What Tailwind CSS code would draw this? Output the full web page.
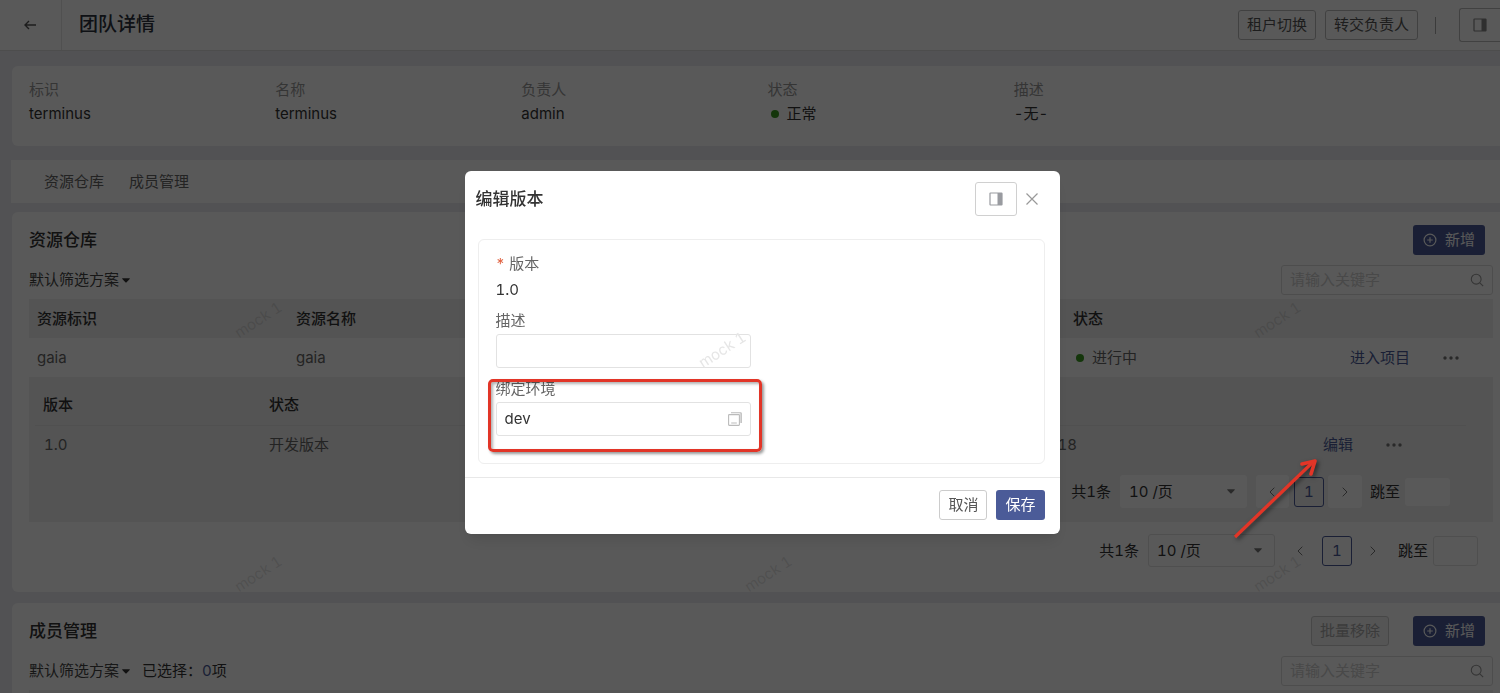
<!DOCTYPE html>
<html lang="zh-CN">
<head>
  <meta charset="UTF-8" />
  <meta name="viewport" content="width=device-width, initial-scale=1.0" />
  <title>团队详情</title>
  <script src="https://cdn.jsdelivr.net/npm/@tailwindcss/browser@4"></script>
  <style>body { font-family: Inter, 'Noto Sans CJK SC', sans-serif; }</style>
</head>
<body class="text-[15px] leading-6 text-[#333] tabular-nums">

  <!-- Shared icons -->
  <svg class="hidden">
    <symbol id="panel" viewBox="0 0 14 14">
      <path d="M1.5 1h11a.5.5 0 0 1 .5.5v11a.5.5 0 0 1-.5.5h-11a.5.5 0 0 1-.5-.5v-11a.5.5 0 0 1 .5-.5z" fill="none" stroke="currentColor" stroke-width="1.2" />
      <path d="M8.5 1H13v12H8.5z" fill="currentColor" />
    </symbol>
    <symbol id="plus" viewBox="0 0 14 14">
      <g fill="none" stroke="currentColor" stroke-width="1.2"><circle cx="7" cy="7" r="5.9" /><path d="M7 4.2v5.6M4.2 7h5.6" /></g>
    </symbol>
    <symbol id="search" viewBox="0 0 14 14">
      <g fill="none" stroke="currentColor" stroke-width="1.1"><circle cx="6.2" cy="6.2" r="4.9" /><path d="M9.8 9.8l3.4 3.4" /></g>
    </symbol>
    <symbol id="caret" viewBox="0 0 8 5"><path d="M.6.3h6.8c.4 0 .6.4.3.7L4.4 4.4a.6.6 0 0 1-.8 0L.3 1C0 .7.2.3.6.3z" fill="currentColor" /></symbol>
    <symbol id="prev" viewBox="0 0 6 10"><path d="M5.3.7L1 5l4.3 4.3" fill="none" stroke="currentColor" /></symbol>
    <symbol id="next" viewBox="0 0 6 10"><path d="M.7.7L5 5 .7 9.3" fill="none" stroke="currentColor" /></symbol>
    <symbol id="more" viewBox="0 0 16 4"><g fill="currentColor"><circle cx="2" cy="2" r="1.7" /><circle cx="8" cy="2" r="1.7" /><circle cx="14" cy="2" r="1.7" /></g></symbol>
  </svg>

  <div class="relative flex h-screen flex-col overflow-hidden bg-[#ebebf0]">

    <!-- Header -->
    <header class="flex h-[51px] shrink-0 items-center border-b border-[#ddd] bg-white">
      <a href="#" aria-label="返回" class="flex h-full w-[62px] items-center border-r border-[#e5e5e5] pl-6 text-[#555]">
        <svg class="h-[10px] w-3" viewBox="0 0 12 10"><path d="M12 5H1M5 1L1 5l4 4" fill="none" stroke="currentColor" stroke-width="1.4" /></svg>
      </a>
      <h1 class="ml-[17px] flex-1 text-[19px] font-medium text-[#2b323c]">团队详情</h1>
      <button class="h-[30px] rounded-[3px] border border-[#bbb] px-2 leading-7 text-[#555]">租户切换</button>
      <button class="ml-[9px] h-[30px] rounded-[3px] border border-[#bbb] px-2 leading-7 text-[#555]">转交负责人</button>
      <span class="mr-[23px] ml-[17px] h-[17px] w-px bg-[#aaa]"></span>
      <button aria-label="侧栏" class="flex h-[34px] w-[41px] items-center justify-center rounded-l-[3px] border border-r-0 border-[#bbb] text-[#888]"><svg class="h-[14px] w-[14px]"><use href="#panel" /></svg></button>
    </header>

    <!-- Team info -->
    <section class="mt-[15px] ml-3 h-20 shrink-0 overflow-hidden rounded-l-md bg-white pt-3 pl-[17px]">
      <dl class="-mr-1.5 grid grid-cols-6">
        <div><dt class="text-[#999]">标识</dt><dd>terminus</dd></div>
        <div><dt class="text-[#999]">名称</dt><dd>terminus</dd></div>
        <div><dt class="text-[#999]">负责人</dt><dd>admin</dd></div>
        <div><dt class="text-[#999]">状态</dt><dd class="flex items-center gap-2 pl-[3px]"><span class="h-2 w-2 rounded-full bg-[#3b9a22]"></span>正常</dd></div>
        <div><dt class="text-[#999]">描述</dt><dd>-无-</dd></div>
      </dl>
    </section>

    <!-- Tabs -->
    <nav class="mt-[14px] ml-[11px] flex h-[43px] shrink-0 items-center gap-[25px] bg-white pl-[33px] text-[#666]">
      <a href="#repo">资源仓库</a>
      <a href="#members">成员管理</a>
    </nav>

    <!-- Repositories -->
    <section id="repo" class="mt-[9px] ml-3 shrink-0 rounded-l-md bg-white pt-[13px] pr-[7px] pb-[25px] pl-[17px]">
      <div class="flex h-[30px] items-center justify-between pr-2">
        <h2 class="text-[17px] font-medium">资源仓库</h2>
        <button class="flex h-[30px] items-center gap-2 rounded-[3px] bg-[#4b5b98] px-[10px] text-white"><svg class="h-[14px] w-[14px]"><use href="#plus" /></svg>新增</button>
      </div>
      <div class="mt-[10px] flex h-[30px] items-center justify-between">
        <label class="flex items-center gap-[2px]">
          <select aria-label="筛选方案" class="appearance-none text-[#444]"><option>默认筛选方案</option></select>
          <svg class="h-[5px] w-2"><use href="#caret" /></svg>
        </label>
        <label class="flex h-[30px] w-[212px] items-center rounded-[3px] border border-[#ddd] px-2 text-[#999]">
          <input aria-label="关键字" placeholder="请输入关键字" class="min-w-0 flex-1 placeholder:text-[#d0d0d0]" />
          <svg class="h-[14px] w-[14px]"><use href="#search" /></svg>
        </label>
      </div>

      <table class="mt-1 w-full table-fixed text-left">
        <colgroup><col class="w-[259px]" /><col class="w-[259px]" /><col class="w-[259px]" /><col class="w-[259px]" /><col class="w-[259px]" /><col /></colgroup>
        <thead class="bg-[#efefef]">
          <tr class="h-[39px]">
            <th class="px-2 font-medium">资源标识</th>
            <th class="px-2 font-medium">资源名称</th>
            <th></th>
            <th></th>
            <th class="px-2 font-medium">状态</th>
            <th></th>
          </tr>
        </thead>
        <tbody class="text-[#666]">
          <tr class="h-[39px]">
            <td class="px-2">gaia</td>
            <td class="px-2">gaia</td>
            <td></td>
            <td></td>
            <td class="px-2"><span class="flex items-center gap-2 pl-[3px]"><i class="h-2 w-2 rounded-full bg-[#3b9a22]"></i>进行中</span></td>
            <td class="pl-[26px]"><span class="flex items-center gap-[33px]"><a href="#" class="text-[#4b5b98]">进入项目</a><button aria-label="更多" class="text-[#777]"><svg class="h-1 w-4"><use href="#more" /></svg></button></span></td>
          </tr>
          <tr>
            <td colspan="6" class="bg-[#efefef] pt-2 pb-[14px] pl-[6px]">
              <!-- Versions -->
              <div class="pr-[27px]">
                <table class="w-full table-fixed">
                  <colgroup><col class="w-[225px]" /><col class="w-[225px]" /><col class="w-[225px]" /><col class="w-[375px]" /><col /></colgroup>
                  <thead>
                    <tr class="h-10 border-b border-[#e4e4e4] text-[#333]">
                      <th class="px-2 font-medium">版本</th>
                      <th class="px-[9px] font-medium">状态</th>
                      <th></th>
                      <th></th>
                      <th></th>
                    </tr>
                  </thead>
                  <tbody>
                    <tr class="h-10">
                      <td class="px-[9px]">1.0</td>
                      <td class="px-[9px]">开发版本</td>
                      <td></td>
                      <td class="px-2 text-right">18</td>
                      <td><span class="flex items-center justify-end gap-[33px] pr-16"><a href="#" class="text-[#4b5b98]">编辑</a><button aria-label="更多" class="text-[#777]"><svg class="h-1 w-4"><use href="#more" /></svg></button></span></td>
                    </tr>
                  </tbody>
                </table>
              </div>
              <div class="mt-[10px] flex h-[33px] items-center justify-end pr-[43px] text-[#333]">
                <span>共1条</span>
                <label class="ml-[9px] flex h-[33px] w-[127px] items-center rounded-[3px] bg-white pr-3 pl-[9px]">
                  <select aria-label="每页条数" class="flex-1 appearance-none"><option>10 /页</option></select>
                  <svg class="h-[5px] w-2 text-[#777]"><use href="#caret" /></svg>
                </label>
                <button aria-label="上一页" class="ml-[9px] flex h-[33px] w-[33px] items-center justify-center rounded-[3px] bg-white text-[#777]"><svg class="h-[10px] w-[6px]"><use href="#prev" /></svg></button>
                <button class="ml-[5px] h-[30px] w-[30px] rounded-[3px] border border-[#4b5b98] text-[#4b5b98]">1</button>
                <button aria-label="下一页" class="ml-1 flex h-[33px] w-[34px] items-center justify-center rounded-[3px] bg-white text-[#777]"><svg class="h-[10px] w-[6px]"><use href="#next" /></svg></button>
                <label class="ml-2 flex items-center gap-[5px]">跳至<input class="h-7 w-[45px] rounded-[3px] bg-white px-1" /></label>
              </div>
            </td>
          </tr>
        </tbody>
      </table>

      <div class="mt-3 flex h-[33px] items-center justify-end pr-[15px]">
        <span>共1条</span>
        <label class="ml-[9px] flex h-[33px] w-[127px] items-center rounded-[3px] border border-[#e2e2e2] pr-3 pl-2">
          <select aria-label="每页条数" class="flex-1 appearance-none"><option>10 /页</option></select>
          <svg class="h-[5px] w-2 text-[#777]"><use href="#caret" /></svg>
        </label>
        <button aria-label="上一页" class="ml-[9px] flex h-[33px] w-[33px] items-center justify-center text-[#777]"><svg class="h-[10px] w-[6px]"><use href="#prev" /></svg></button>
        <button class="ml-[5px] h-[30px] w-[30px] rounded-[3px] border border-[#4b5b98] text-[#4b5b98]">1</button>
        <button aria-label="下一页" class="ml-1 flex h-[33px] w-[34px] items-center justify-center text-[#777]"><svg class="h-[10px] w-[6px]"><use href="#next" /></svg></button>
        <label class="ml-2 flex items-center gap-[5px]">跳至<input class="h-[30px] w-[45px] rounded-[3px] border border-[#e2e2e2] px-1" /></label>
      </div>
    </section>

    <!-- Members -->
    <section id="members" class="mt-[11px] ml-3 shrink-0 rounded-tl-md bg-white pt-[13px] pr-[7px] pl-[17px]">
      <div class="flex h-[30px] items-center pr-2">
        <h2 class="flex-1 text-[17px] font-medium">成员管理</h2>
        <button disabled class="h-[30px] rounded-[3px] border border-[#ccc] bg-[#f2f2f2] px-2 leading-7 text-[#aaa]">批量移除</button>
        <button class="ml-6 flex h-[30px] items-center gap-2 rounded-[3px] bg-[#4b5b98] px-[10px] text-white"><svg class="h-[14px] w-[14px]"><use href="#plus" /></svg>新增</button>
      </div>
      <div class="mt-[10px] flex h-[30px] items-center">
        <label class="flex items-center gap-[2px]">
          <select aria-label="筛选方案" class="appearance-none text-[#444]"><option>默认筛选方案</option></select>
          <svg class="h-[5px] w-2"><use href="#caret" /></svg>
        </label>
        <p class="ml-3 flex-1">已选择：<span class="text-[#4b5b98]">0</span>项</p>
        <label class="flex h-[30px] w-[212px] items-center rounded-[3px] border border-[#ddd] px-2 text-[#999]">
          <input aria-label="关键字" placeholder="请输入关键字" class="min-w-0 flex-1 placeholder:text-[#d0d0d0]" />
          <svg class="h-[14px] w-[14px]"><use href="#search" /></svg>
        </label>
      </div>
      <div class="mt-1 h-10 bg-[#efefef]"></div>
    </section>

    <!-- Watermarks -->
    <div aria-hidden="true" class="pointer-events-none text-[#777]/20">
      <span class="absolute top-[308px] left-[232px] -rotate-[33deg]">mock 1</span>
      <span class="absolute top-[308px] left-[1251px] -rotate-[33deg]">mock 1</span>
      <span class="absolute top-[562px] left-[232px] -rotate-[33deg]">mock 1</span>
      <span class="absolute top-[562px] left-[742px] -rotate-[33deg]">mock 1</span>
      <span class="absolute top-[562px] left-[1251px] -rotate-[33deg]">mock 1</span>
    </div>
  </div>

  <!-- Modal -->
  <div class="fixed inset-0 flex items-center justify-center bg-black/65 pt-[11px] pl-6">
    <div role="dialog" aria-labelledby="dialog-title" class="w-[595px] rounded-md bg-white shadow-lg">
      <div class="flex h-14 items-center pr-[22px] pl-[11px]">
        <h2 id="dialog-title" class="flex-1 text-[17px] font-medium">编辑版本</h2>
        <button aria-label="侧栏" class="mr-[9px] flex h-[34px] w-[42px] items-center justify-center rounded-[3px] border border-[#d0d0d0] text-[#999ba0]"><svg class="h-[14px] w-[14px]"><use href="#panel" /></svg></button>
        <button aria-label="关闭" class="text-[#999]"><svg class="h-3 w-3" viewBox="0 0 12 12"><path d="M.5.5l11 11M11.5.5l-11 11" fill="none" stroke="currentColor" stroke-width="1.2" /></svg></button>
      </div>
      <div class="mt-3 mr-[15px] mb-[13px] ml-[13px] rounded-md border border-[#eee] px-[17px] pt-3 pb-[27px]">
        <div class="text-[#666]"><span class="mr-1 text-[#e0603f]">*</span>版本</div>
        <div class="mt-[2px]">1.0</div>
        <label for="desc" class="mt-[7px] block text-[#666]">描述</label>
        <div class="relative mt-px w-[255px]">
          <input id="desc" class="block h-[34px] w-full rounded-[3px] border border-[#e2e2e2] px-2" />
          <span aria-hidden="true" class="absolute top-1 right-[2px] -rotate-[33deg] text-[#e6e6e6]">mock 1</span>
        </div>
        <div class="relative mt-[9px]">
          <label for="env" class="block text-[#666]">绑定环境</label>
          <div class="mt-px flex h-[34px] w-[255px] items-center rounded-[3px] border border-[#e2e2e2] px-2">
            <input id="env" value="dev" class="min-w-0 flex-1" />
            <svg class="h-[14px] w-[14px] text-[#bbb]" viewBox="0 0 14 14"><g fill="none" stroke="currentColor" stroke-width="1.1"><rect x=".6" y="2.6" width="10.8" height="10.8" rx=".6" /><path d="M3 .7h9.6a.7.7 0 0 1 .7.7V11M3.2 11h5.6" /><path d="M12.4 1v10" stroke-opacity=".5" /></g></svg>
          </div>
          <div class="absolute top-[2px] -left-2 h-[73px] w-[274px] rounded-[5px] border-[3px] border-[#e23527] shadow-[2px_2px_3px_rgba(0,0,0,0.4),inset_2px_2px_3px_rgba(0,0,0,0.3)]"></div>
        </div>
      </div>
      <div class="flex justify-end gap-[9px] border-t border-[#e8e8e8] px-[15px] pt-3 pb-[14px]">
        <button class="h-[30px] rounded-[3px] border border-[#ccc] px-2 leading-7 text-[#555]">取消</button>
        <button class="h-[30px] rounded-[3px] bg-[#4b5b98] px-[9px] text-white">保存</button>
      </div>
    </div>
  </div>

  <!-- Pointer arrow -->
  <svg class="pointer-events-none absolute top-[450px] left-[1227px] h-24 w-24 drop-shadow-[2px_2px_2px_rgba(0,0,0,0.5)]" viewBox="0 0 96 96">
    <path d="M8 87L86 12" stroke="#e23527" stroke-width="3.2" />
    <path d="M75 14l13-3-4 13" fill="none" stroke="#e23527" stroke-width="3.6" stroke-linecap="round" stroke-linejoin="round" />
  </svg>

</body>
</html>
